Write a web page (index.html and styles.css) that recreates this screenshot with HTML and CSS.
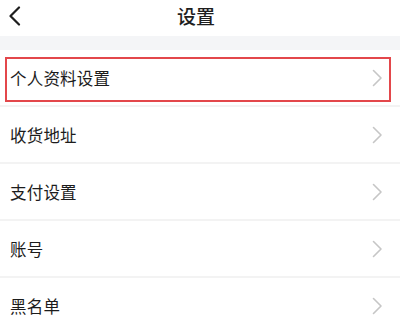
FILE: index.html
```html
<!DOCTYPE html>
<html lang="zh">
<head>
<meta charset="utf-8">
<link rel="stylesheet" href="styles.css">
</head>
<body>
<div class="page">
  <header class="topbar">
    <span class="back">
      <svg width="13" height="20" viewBox="0 0 13 20"><polyline points="11,1.5 2.5,10 11,18.5" fill="none" stroke="#1e1e1e" stroke-width="2.2" stroke-linecap="round" stroke-linejoin="round"/></svg>
    </span>
    <h1 class="title">设置</h1>
  </header>
  <div class="band"></div>
  <ul class="list">
    <li class="row highlighted"><span class="label">个人资料设置</span><span class="chev"><svg width="11" height="18" viewBox="0 0 11 18"><polyline points="1.5,1.5 9,9 1.5,16.5" fill="none" stroke="#c6c6c6" stroke-width="1.6" stroke-linecap="round" stroke-linejoin="round"/></svg></span><span class="mark"></span></li>
    <li class="row"><span class="label">收货地址</span><span class="chev"><svg width="11" height="18" viewBox="0 0 11 18"><polyline points="1.5,1.5 9,9 1.5,16.5" fill="none" stroke="#c6c6c6" stroke-width="1.6" stroke-linecap="round" stroke-linejoin="round"/></svg></span></li>
    <li class="row"><span class="label">支付设置</span><span class="chev"><svg width="11" height="18" viewBox="0 0 11 18"><polyline points="1.5,1.5 9,9 1.5,16.5" fill="none" stroke="#c6c6c6" stroke-width="1.6" stroke-linecap="round" stroke-linejoin="round"/></svg></span></li>
    <li class="row"><span class="label">账号</span><span class="chev"><svg width="11" height="18" viewBox="0 0 11 18"><polyline points="1.5,1.5 9,9 1.5,16.5" fill="none" stroke="#c6c6c6" stroke-width="1.6" stroke-linecap="round" stroke-linejoin="round"/></svg></span></li>
    <li class="row"><span class="label">黑名单</span><span class="chev"><svg width="11" height="18" viewBox="0 0 11 18"><polyline points="1.5,1.5 9,9 1.5,16.5" fill="none" stroke="#c6c6c6" stroke-width="1.6" stroke-linecap="round" stroke-linejoin="round"/></svg></span></li>
  </ul>
</div>
</body>
</html>
```
FILE: styles.css
```css
html, body {
  margin: 0;
  padding: 0;
  background: #ffffff;
}
body {
  font-family: "Noto Sans CJK SC", "Noto Sans", sans-serif;
  color: #222222;
  overflow: hidden;
}
.page {
  width: 400px;
  height: 321px;
  overflow: hidden;
}
.topbar {
  height: 36px;
  display: flex;
  align-items: center;
  justify-content: center;
  position: relative;
}
.back {
  position: absolute;
  left: 8px;
  top: 6px;
  display: flex;
}
.title {
  margin: 0;
  font-size: 19px;
  font-weight: 500;
  line-height: 30px;
  margin-top: -4px;
  margin-left: -8px;
  color: #1e1e1e;
}
.band {
  height: 14px;
  background: #f4f5f7;
}
.list {
  list-style: none;
  margin: 0;
  padding: 0;
}
.row {
  height: 55px;
  border-bottom: 2px solid #f3f3f3;
  display: flex;
  align-items: center;
  justify-content: space-between;
  padding: 0 17px 0 10px;
  position: relative;
}
.label {
  font-size: 16.5px;
  line-height: 20px;
  color: #1c1c1c;
  letter-spacing: 0.2px;
}
.chev {
  display: flex;
}
.mark {
  position: absolute;
  left: 5px;
  right: 9px;
  top: 7px;
  bottom: 3px;
  border: 2px solid #e3474b;
}
```
